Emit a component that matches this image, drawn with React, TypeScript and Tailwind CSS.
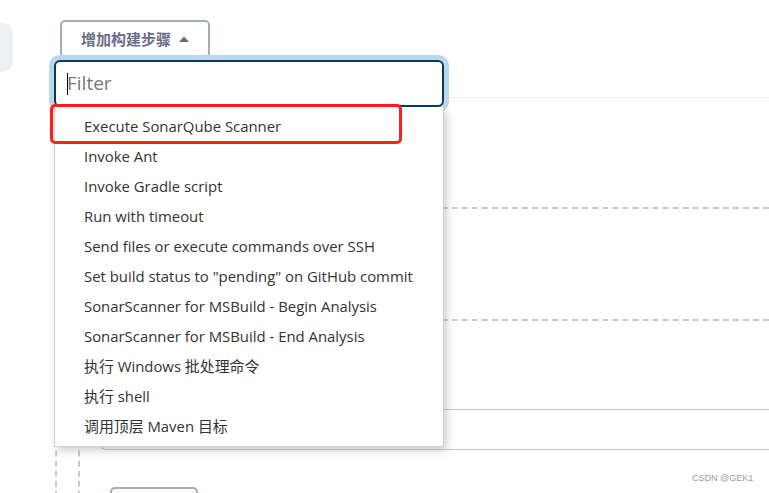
import React from "react";

const items: string[] = [
  "Execute SonarQube Scanner",
  "Invoke Ant",
  "Invoke Gradle script",
  "Run with timeout",
  "Send files or execute commands over SSH",
  'Set build status to "pending" on GitHub commit',
  "SonarScanner for MSBuild - Begin Analysis",
  "SonarScanner for MSBuild - End Analysis",
  "执行 Windows 批处理命令",
  "执行 shell",
  "调用顶层 Maven 目标",
];

export default function App() {
  return (
    <div
      className="relative w-[769px] h-[493px] overflow-hidden bg-white flex"
      style={{ fontFamily: '"Open Sans", "Noto Sans CJK SC", sans-serif' }}
    >
      {/* left sidebar fragment */}
      <aside className="w-[13px] shrink-0 pt-[23px]">
        <div className="h-[49px] bg-[#eef0f5] rounded-r-[10px]" />
      </aside>

      {/* main column */}
      <main className="flex-1 flex flex-col pl-[42px] pt-[20px]">
        <button className="ml-[5px] w-[150px] h-[38px] shrink-0 border-2 border-[#a3adbb] rounded-[5px] flex items-center justify-center gap-[8px] text-[15px] font-bold text-[#6b6c88]">
          <span style={{ fontFamily: '"Noto Sans CJK SC", sans-serif' }}>增加构建步骤</span>
          <svg width="10" height="6" viewBox="0 0 10 6">
            <path d="M0 6 L5 0.5 L10 6 Z" fill="#6b6c88" />
          </svg>
        </button>
        <div className="mt-[39px] border-t border-[#eceef4]" />
        <div className="flex-1 border-l-2 border-dashed border-[#c6cbd1] pl-[21px]">
          <div className="h-full border-l-2 border-dashed border-[#c6cbd1] flex flex-col">
            <div className="h-[111px] shrink-0 border-b-2 border-dashed border-[#c6cbd1]" />
            <div className="h-[112px] shrink-0 border-b-2 border-dashed border-[#c6cbd1]" />
            <div className="pl-[20px] pt-[88px] shrink-0">
              <div className="h-[41px] border border-r-0 border-[#c4ccd4] rounded-l-[6px]" />
            </div>
            <div className="pl-[30px] pt-[37px]">
              <div className="w-[88px] h-[30px] border-2 border-[#a3adbb] rounded-[5px]" />
            </div>
          </div>
        </div>
      </main>

      {/* dropdown overlay */}
      <div className="absolute left-[54px] top-[60px] w-[390px]">
        <div className="h-[47px] border-2 border-[#0b3a5e] rounded-[6px] ring-[5px] ring-[#bdd7ea] bg-white flex items-center pl-[11px]">
          <div className="w-[1px] h-[22px] bg-black" />
          <span className="-ml-[1px] text-[19px] text-[#777777]">Filter</span>
        </div>
        <div className="bg-white border border-t-0 border-[#cdd1d6] pt-[4px] pb-[5px] shadow-[3px_4px_8px_rgba(0,0,0,0.18)]">
          {items.map((t) => (
            <div key={t} className="h-[30px] flex items-center pl-[29px] text-[14.9px] text-[#333333] whitespace-nowrap">
              {t}
            </div>
          ))}
        </div>
      </div>

      {/* red highlight */}
      <div className="absolute left-[50px] top-[104px] w-[352px] h-[40px] border-[3px] border-[#ff1f1a] rounded-[5px]" />

      {/* watermark */}
      <div
        className="absolute left-[692px] top-[472px] text-[9px] text-[#9d9d9d]"
        style={{ fontFamily: '"Liberation Sans", sans-serif' }}
      >
        CSDN @GEK1
      </div>
    </div>
  );
}
